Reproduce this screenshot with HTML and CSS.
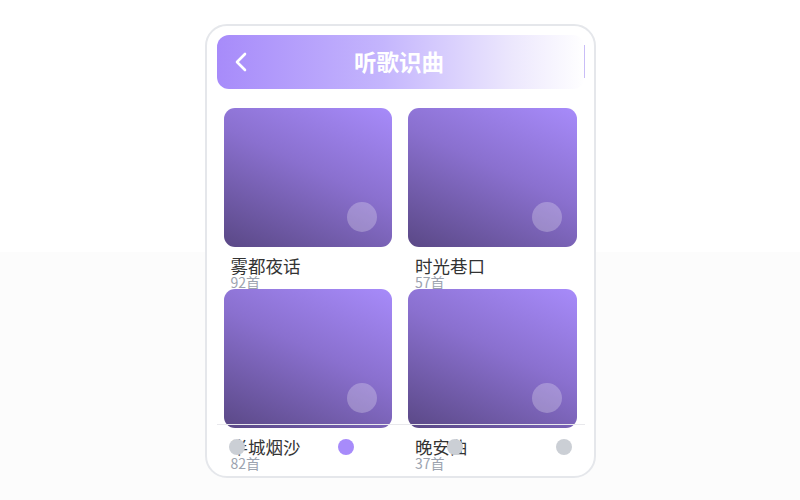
FILE: index.html
```html
<!DOCTYPE html>
<html lang="zh">
<head>
<meta charset="utf-8">
<title>听歌识曲</title>
<link rel="stylesheet" href="styles.css">
</head>
<body>
<div class="phone">
  <header class="topbar">
    <span class="back">
      <svg width="14" height="20" viewBox="0 0 14 20"><path d="M11 2 L3 10 L11 18" fill="none" stroke="#fff" stroke-width="2.6" stroke-linecap="round" stroke-linejoin="round"/></svg>
    </span>
    <h1 class="title">听歌识曲</h1>
    <span class="edge"></span>
  </header>
  <main class="grid">
    <div class="item">
      <div class="cover"><span class="play"></span></div>
      <div class="meta"><div class="name">雾都夜话</div><div class="count">92首</div></div>
    </div>
    <div class="item">
      <div class="cover"><span class="play"></span></div>
      <div class="meta"><div class="name">时光巷口</div><div class="count">57首</div></div>
    </div>
    <div class="item">
      <div class="cover"><span class="play"></span></div>
      <div class="meta"><div class="name">半城烟沙</div><div class="count">82首</div></div>
    </div>
    <div class="item">
      <div class="cover"><span class="play"></span></div>
      <div class="meta"><div class="name">晚安曲</div><div class="count">37首</div></div>
    </div>
  </main>
  <nav class="tabbar">
    <span class="dot"></span>
    <span class="dot active"></span>
    <span class="dot"></span>
    <span class="dot"></span>
  </nav>
</div>
</body>
</html>
```

FILE: styles.css
```css
* { box-sizing: border-box; }
html, body { margin: 0; height: 100%; }
body {
  background: linear-gradient(#ffffff 50.4%, #fcfcfc 50.4%);
  display: flex;
  justify-content: center;
  align-items: center;
  font-family: "Noto Sans CJK SC", "Noto Sans", sans-serif;
}
.phone {
  position: relative;
  width: 391px;
  height: 454px;
  border: 2px solid #e5e7eb;
  border-radius: 22px;
  background: #fff;
  padding: 9px 9px 0 9px;
  overflow: hidden;
  margin-top: 1px;
}
.topbar {
  position: relative;
  height: 54px;
  border-radius: 12px;
  background: linear-gradient(90deg, #a78bfa 0%, #c4b5fd 45%, #ece7fd 80%, #ffffff 100%);
  display: flex;
  align-items: center;
  justify-content: center;
  margin-left: 1px;
}
.back {
  position: absolute;
  left: 17px;
  top: 17px;
  display: flex;
}
.title {
  margin: 0;
  color: #fff;
  font-size: 22.5px;
  font-weight: 700;
  line-height: 1;
  margin-left: -3px;
}
.edge {
  position: absolute;
  right: 0;
  top: 10px;
  width: 1px;
  height: 33px;
  background: #c9bdf7;
}
.grid {
  display: grid;
  grid-template-columns: 1fr 1fr;
  grid-auto-rows: 165px;
  column-gap: 16px;
  row-gap: 16px;
  padding: 19px 8px 0 8px;
}
.item { display: flex; flex-direction: column; }
.cover {
  position: relative;
  height: 139px;
  border-radius: 11px;
  background: linear-gradient(205deg, #a78bfa 0%, #8a70cf 45%, #5a4886 100%);
  flex: none;
}
.play {
  position: absolute;
  right: 15px;
  bottom: 15px;
  width: 30px;
  height: 30px;
  border-radius: 50%;
  background: rgba(255, 255, 255, 0.25);
}
.meta { padding: 9px 7px 0 7px; }
.name {
  font-size: 17.5px;
  line-height: 20px;
  color: #333;
}
.count {
  font-size: 14px;
  line-height: 14px;
  color: #9ca3af;
  margin-top: -1px;
}
.tabbar {
  position: absolute;
  left: 10px;
  right: 9px;
  top: 398px;
  height: 52px;
  border-top: 1px solid #e8e8ec;
  display: flex;
  justify-content: space-between;
  align-items: flex-start;
  padding: 14px 12px 0 12px;
}
.dot {
  width: 16px;
  height: 16px;
  border-radius: 50%;
  background: #cbcfd5;
}
.dot.active { background: #a78bfa; }
```
